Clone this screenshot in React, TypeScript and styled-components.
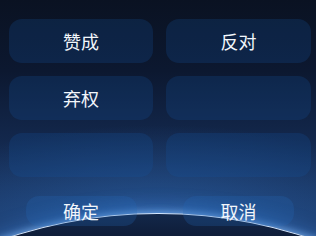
import styled, { createGlobalStyle } from 'styled-components';

const GlobalStyle = createGlobalStyle`
	html, body {
		margin: 0;
		padding: 0;
		background: #0b1324;
	}
	body {
		font-family: "Noto Sans CJK SC", "Noto Sans", sans-serif;
	}
`;

const options = ['赞成', '反对', '弃权', '', '', ''];

export default function App() {
	return (
		<>
			<GlobalStyle />
			<Stage>
				<Horizon />
				<OptionGrid>
					{options.map((label, i) => (
						<OptionTile key={i}>{label}</OptionTile>
					))}
				</OptionGrid>
				<ActionRow>
					<ActionButton>确定</ActionButton>
					<ActionButton>取消</ActionButton>
				</ActionRow>
			</Stage>
		</>
	);
}

const Stage = styled.div`
	position: relative;
	width: 316px;
	height: 236px;
	overflow: hidden;
	box-sizing: border-box;
	padding: 19px 5px 0 9px;
	display: flex;
	flex-direction: column;
	background: radial-gradient(ellipse 260px 90px at 158px 215px, rgba(50, 115, 195, 0.45), rgba(50, 115, 195, 0) 100%),
		linear-gradient(180deg, #0a1222 0%, #0c1830 30%, #13284d 60%, #1b3a6a 90%);
`;

const Horizon = styled.div`
	position: absolute;
	left: -322px;
	top: 213px;
	width: 960px;
	height: 960px;
	border-radius: 50%;
	background: linear-gradient(180deg, #13284a 0%, #0f1e3a 20px);
	border-top: 1.5px solid #d6e8ff;
	box-shadow: 0 -2px 6px rgba(140, 195, 255, 0.55), 0 -6px 18px rgba(80, 150, 240, 0.35);
	z-index: 0;
`;

const OptionGrid = styled.div`
	position: relative;
	z-index: 1;
	display: grid;
	grid-template-columns: 144px 145px;
	grid-auto-rows: 44px;
	column-gap: 13px;
	row-gap: 13px;
`;

const OptionTile = styled.div`
	border-radius: 13px;
	background: rgba(20, 85, 160, 0.24);
	color: #f2f6fb;
	font-size: 18px;
	display: flex;
	align-items: center;
	justify-content: center;
`;

const ActionRow = styled.div`
	position: relative;
	z-index: 1;
	margin-top: 19px;
	display: grid;
	grid-template-columns: 144px 145px;
	column-gap: 13px;
	justify-items: center;
`;

const ActionButton = styled.div`
	width: 111px;
	height: 30px;
	border-radius: 13px;
	background: rgba(35, 105, 185, 0.25);
	color: #f2f6fb;
	font-size: 18px;
	display: flex;
	align-items: center;
	justify-content: center;
`;
